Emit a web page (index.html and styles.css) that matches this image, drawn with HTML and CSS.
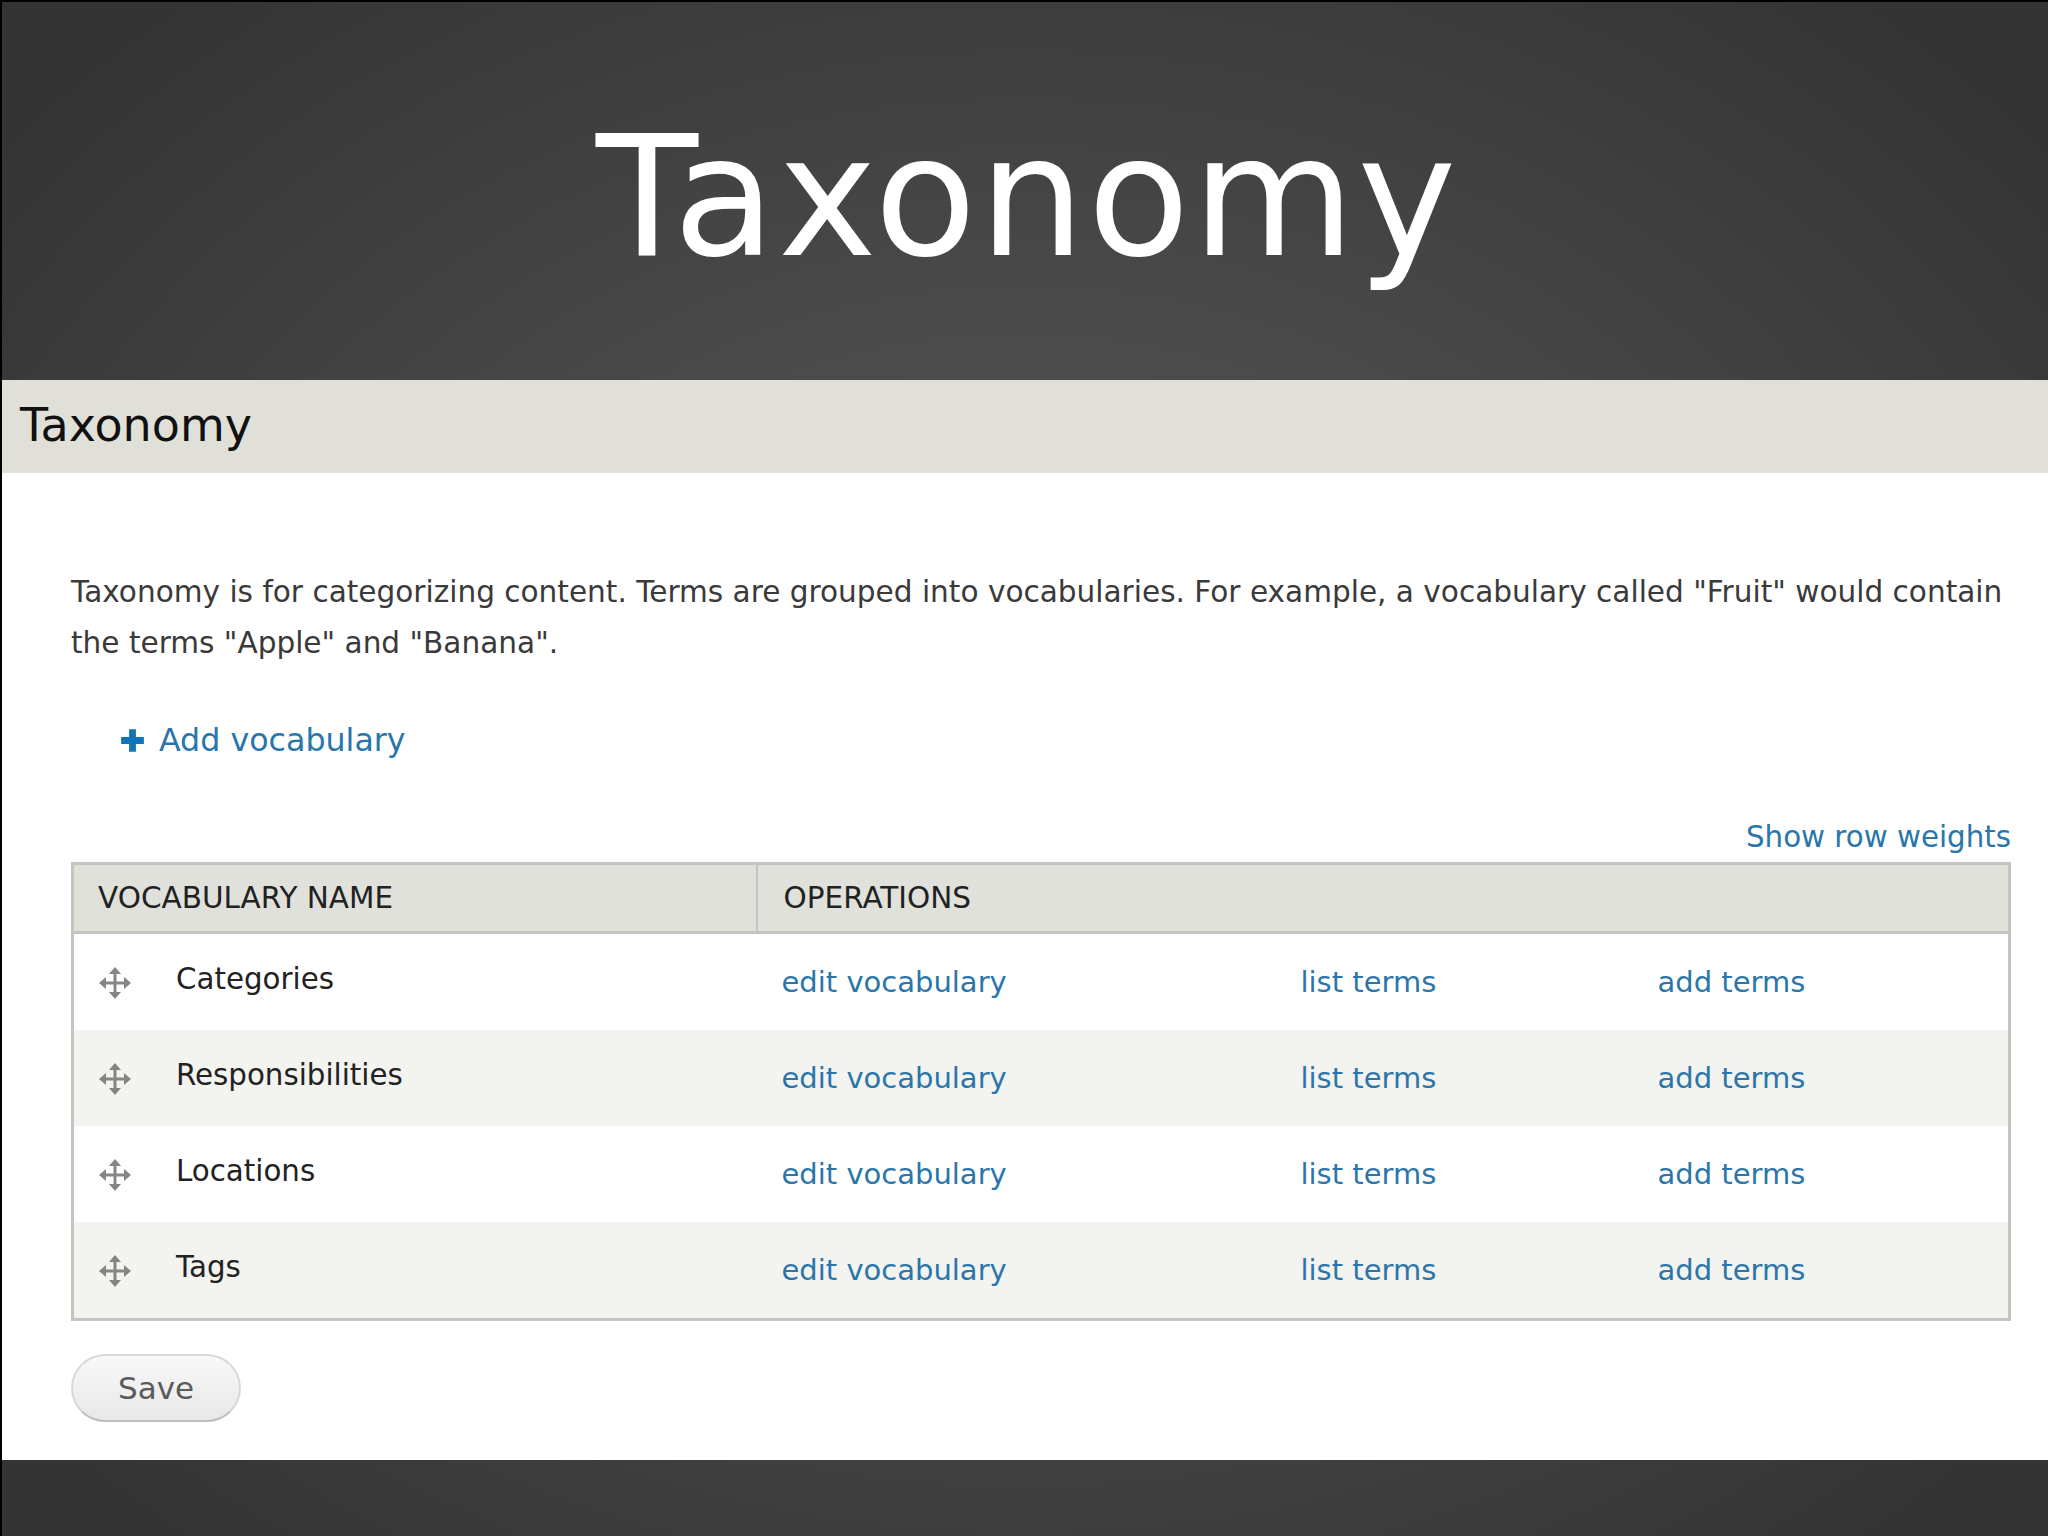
FILE: index.html
```html
<!DOCTYPE html>
<html lang="en">
<head>
  <meta charset="UTF-8">
  <meta name="viewport" content="width=device-width, initial-scale=1.0">
  <title>Taxonomy</title>
  <link rel="stylesheet" href="styles.css">
</head>
<body>
  <div class="slide">
    <h1 class="slide-title">Taxonomy</h1>

    <div class="shot">
      <h2 class="shot-heading">Taxonomy</h2>

      <div class="shot-body">
        <p class="intro">Taxonomy is for categorizing content. Terms are grouped into vocabularies. For example, a vocabulary called "Fruit" would contain the terms "Apple" and "Banana".</p>

        <div class="action">
          <svg class="plus-icon" viewBox="0 0 22 22"><path d="M8 1h6v7h7v6h-7v7H8v-7H1V8h7z"/></svg>
          <a href="#">Add vocabulary</a>
        </div>

        <div class="weights"><a href="#">Show row weights</a></div>

        <table class="vocab-table">
          <colgroup>
            <col class="col-name">
            <col class="col-edit">
            <col class="col-list">
            <col>
          </colgroup>
          <thead>
            <tr>
              <th class="th-name">VOCABULARY NAME</th>
              <th class="th-ops" colspan="3">OPERATIONS</th>
            </tr>
          </thead>
          <tbody>
            <tr>
              <td class="name-cell">
                <div class="name-wrap">
                  <svg class="drag-icon" viewBox="0 0 32 32"><use href="#drag"/></svg>
                  <span>Categories</span>
                </div>
              </td>
              <td class="edit-cell"><a href="#">edit vocabulary</a></td>
              <td><a href="#">list terms</a></td>
              <td><a href="#">add terms</a></td>
            </tr>
            <tr class="even">
              <td class="name-cell">
                <div class="name-wrap">
                  <svg class="drag-icon" viewBox="0 0 32 32"><use href="#drag"/></svg>
                  <span>Responsibilities</span>
                </div>
              </td>
              <td class="edit-cell"><a href="#">edit vocabulary</a></td>
              <td><a href="#">list terms</a></td>
              <td><a href="#">add terms</a></td>
            </tr>
            <tr>
              <td class="name-cell">
                <div class="name-wrap">
                  <svg class="drag-icon" viewBox="0 0 32 32"><use href="#drag"/></svg>
                  <span>Locations</span>
                </div>
              </td>
              <td class="edit-cell"><a href="#">edit vocabulary</a></td>
              <td><a href="#">list terms</a></td>
              <td><a href="#">add terms</a></td>
            </tr>
            <tr class="even">
              <td class="name-cell">
                <div class="name-wrap">
                  <svg class="drag-icon" viewBox="0 0 32 32"><use href="#drag"/></svg>
                  <span>Tags</span>
                </div>
              </td>
              <td class="edit-cell"><a href="#">edit vocabulary</a></td>
              <td><a href="#">list terms</a></td>
              <td><a href="#">add terms</a></td>
            </tr>
          </tbody>
        </table>

        <button class="save-btn" type="button">Save</button>
      </div>
    </div>
  </div>

  <!-- shared drag handle -->
  <svg class="icon-defs" width="0" height="0">
    <defs>
      <g id="drag">
        <path d="M16 3v26M3 16h26" fill="none" stroke="#858585" stroke-width="3"/>
        <path d="M16 0l6 7H10zM16 32l6-7H10zM0 16l7-6v12zM32 16l-7-6v12z" fill="#858585"/>
      </g>
    </defs>
  </svg>
</body>
</html>
```

FILE: styles.css
```css
html, body {
  margin: 0;
  padding: 0;
}
body {
  width: 2048px;
  height: 1536px;
  overflow: hidden;
  background: #000;
  font-family: "DejaVu Sans", sans-serif;
}
.slide {
  height: 1534px;
  margin: 2px 0 0 2px;
  background: radial-gradient(ellipse 1300px 1000px at 50% 50%, #5a5a5a 0%, #4a4a4a 45%, #343434 100%);
}
.slide-title {
  margin: 0;
  height: 378px;
  box-sizing: border-box;
  padding: 95px 0 0 5px;
  text-align: center;
  color: #fff;
  font-size: 167px;
  line-height: 200px;
  font-weight: 400;
  letter-spacing: 2.6px;
}
.shot {
  height: 1080px;
  background: #fff;
}
.shot-heading {
  margin: 0;
  height: 93px;
  padding-left: 18px;
  background: #e0e0d8;
  color: #111;
  font-size: 46px;
  line-height: 90px;
  font-weight: 400;
}
.shot-body {
  padding: 94px 37px 0 69px;
}
.intro {
  margin: 0;
  color: #3a3a3a;
  font-size: 29.55px;
  line-height: 51px;
}
.action {
  display: flex;
  align-items: center;
  gap: 14px;
  margin: 47px 0 0 49px;
  font-size: 31.7px;
  line-height: 48px;
}
.plus-icon {
  width: 25px;
  height: 25px;
  fill: #0f74b8;
}
a {
  color: #2a76ab;
  text-decoration: none;
}
.weights {
  margin-top: 51px;
  text-align: right;
  font-size: 29.3px;
  line-height: 44px;
}
.vocab-table {
  width: 100%;
  margin-top: 3px;
  border-collapse: collapse;
  table-layout: fixed;
  border: 3px solid #c4c4c0;
}
.col-name {
  width: 684px;
}
.col-edit {
  width: 544px;
}
.col-list {
  width: 357px;
}
.vocab-table th {
  height: 66px;
  padding: 0 0 0 24px;
  background: #e1e1dc;
  border-bottom: 3px solid #c4c4c0;
  color: #222;
  font-size: 29.5px;
  font-weight: 400;
  text-align: left;
}
.vocab-table .th-name {
  border-right: 2px solid #c4c4c0;
}
.vocab-table .th-ops {
  padding-left: 26px;
}
.vocab-table td {
  height: 96px;
  padding: 0;
  font-size: 29px;
}
.vocab-table .edit-cell {
  padding-left: 25px;
}
.vocab-table .name-cell {
  padding-left: 25px;
  color: #222;
  font-size: 29.3px;
}
.name-wrap {
  display: flex;
  align-items: center;
  gap: 45px;
}
.name-wrap span {
  margin-bottom: 6px;
}
.even td {
  background: #f3f3f0;
}
.drag-icon {
  width: 32px;
  height: 32px;
  margin-top: 2px;
  flex: none;
}
.icon-defs {
  position: absolute;
}
.save-btn {
  display: block;
  width: 170px;
  height: 68px;
  margin-top: 33px;
  padding: 0;
  border: 2px solid #d8d8d6;
  border-bottom-color: #bdbdbb;
  border-radius: 34px;
  background: linear-gradient(#f8f8f8, #e8e8e8);
  color: #5a5a5a;
  font-family: inherit;
  font-size: 31px;
}
```
